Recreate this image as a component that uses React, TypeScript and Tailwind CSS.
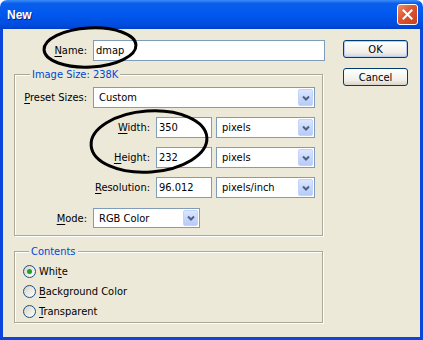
import React from 'react';

const Chevron = () => (
  <svg width="8" height="6" viewBox="0 0 8 6">
    <path d="M1 1.5 L4 4.5 L7 1.5" fill="none" stroke="#4D6185" strokeWidth="2" />
  </svg>
);

const Select = ({ value, className }: { value: string; className: string }) => (
  <div className={`flex items-stretch border border-[#7F9DB9] bg-white ${className}`}>
    <span className="flex-1 flex items-center pl-[5px]">{value}</span>
    <div className="my-px mr-px w-[15px] rounded-[2px] border border-[#C3D3FD] bg-[linear-gradient(to_bottom,#DCE6FE,#B6CBF8)] flex items-center justify-center">
      <Chevron />
    </div>
  </div>
);

const TextBox = ({ value, className }: { value: string; className: string }) => (
  <div className={`flex items-center border border-[#7F9DB9] bg-white pl-[2px] ${className}`}>{value}</div>
);

const Radio = ({ checked, children }: { checked?: boolean; children: React.ReactNode }) => (
  <div className="flex items-center h-[20px]">
    <span className="w-[13px] h-[13px] rounded-full border border-[#1C5180] bg-[linear-gradient(135deg,#D6D2C2,#FFFFFF)] flex items-center justify-center">
      {checked && <span className="w-[5px] h-[5px] rounded-full bg-[#21A121]" />}
    </span>
    <span className="ml-[3px]">{children}</span>
  </div>
);

const U = ({ children }: { children: React.ReactNode }) => (
  <span className="underline underline-offset-[2px]">{children}</span>
);

const XpButton = ({ children, isDefault }: { children: React.ReactNode; isDefault?: boolean }) => (
  <div
    className={`w-[65px] h-[18px] rounded-[3px] border border-[#003C74] bg-[linear-gradient(to_bottom,#FFFFFF,#F0EFEA_70%,#D9D4C8)] flex items-center justify-center ${
      isDefault ? 'shadow-[inset_0_0_0_1px_#B6CCF4]' : ''
    }`}
  >
    {children}
  </div>
);

const App: React.FC = () => {
  return (
    <div className="relative w-[423px] h-[340px] bg-white flex flex-col font-['DejaVu_Sans_Condensed','Liberation_Sans',sans-serif] text-[11px] leading-[13px] text-black">
      {/* Title bar */}
      <div className="h-[29px] rounded-t-[7px] bg-[linear-gradient(to_bottom,#3D8DF8_0%,#0A5EEB_12%,#0058EE_50%,#004BDD_88%,#0040C8_100%)] flex items-center pl-[7px] pr-[5px]">
        <span className="font-['Liberation_Sans',sans-serif] font-bold text-[12px] text-white [text-shadow:1px_1px_0_#0A1E7A] mt-[1px]">
          New
        </span>
        <div className="ml-auto w-[21px] h-[21px] rounded-[3px] border border-white bg-[linear-gradient(135deg,#EC8F6C,#DE5430_45%,#C8401C)] flex items-center justify-center">
          <svg width="11" height="11" viewBox="0 0 11 11">
            <path d="M1.5 1.5 L9.5 9.5 M9.5 1.5 L1.5 9.5" stroke="#fff" strokeWidth="2" strokeLinecap="square" />
          </svg>
        </div>
      </div>

      {/* Body */}
      <div className="flex-1 flex bg-[#ECE9D8] border-x-[3px] border-b-[3px] border-[#0B45DB]">
        <div className="pl-[11px] pt-[11px] w-[322px] flex flex-col">
          {/* Name */}
          <div className="flex items-center h-[21px]">
            <span className="w-[73px] text-right">
              <U>N</U>ame:
            </span>
            <TextBox value="dmap" className="ml-[6px] w-[232px] h-[21px]" />
          </div>

          {/* Image Size group */}
          <fieldset className="mt-[7px] w-[309px] border border-[#ACA899] shadow-[inset_1px_1px_0_#fff,1px_1px_0_#fff] pl-[8px] pr-[7px] pt-[6px] pb-[7px]">
            <legend className="ml-[7px] px-[2px] h-[13px] text-[#0046D5] bg-[#ECE9D8]">Image Size: 238K</legend>
            <div className="flex flex-col gap-[9px]">
              <div className="flex items-center h-[21px]">
                <span className="w-[64px] text-right">
                  <U>P</U>reset Sizes:
                </span>
                <Select value="Custom" className="ml-[6px] w-[222px] h-[21px]" />
              </div>
              <div className="flex items-center h-[21px]">
                <span className="w-[127px] text-right">
                  <U>W</U>idth:
                </span>
                <TextBox value="350" className="ml-[6px] w-[56px] h-[21px]" />
                <Select value="pixels" className="ml-[4px] w-[99px] h-[21px]" />
              </div>
              <div className="flex items-center h-[21px]">
                <span className="w-[127px] text-right">
                  <U>H</U>eight:
                </span>
                <TextBox value="232" className="ml-[6px] w-[56px] h-[21px]" />
                <Select value="pixels" className="ml-[4px] w-[99px] h-[21px]" />
              </div>
              <div className="flex items-center h-[21px]">
                <span className="w-[127px] text-right">
                  <U>R</U>esolution:
                </span>
                <TextBox value="96.012" className="ml-[6px] w-[56px] h-[21px]" />
                <Select value="pixels/inch" className="ml-[4px] w-[99px] h-[21px]" />
              </div>
              <div className="flex items-center h-[20px] mt-px">
                <span className="w-[64px] text-right">
                  <U>M</U>ode:
                </span>
                <Select value="RGB Color" className="ml-[6px] w-[107px] h-[20px]" />
              </div>
            </div>
          </fieldset>

          {/* Contents group */}
          <fieldset className="mt-[9px] w-[309px] border border-[#ACA899] shadow-[inset_1px_1px_0_#fff,1px_1px_0_#fff] pl-[8px] pt-[3px] pb-[1px]">
            <legend className="ml-[6px] px-[2px] h-[13px] text-[#0046D5] bg-[#ECE9D8]">Contents</legend>
            <Radio checked>
              Whi<U>t</U>e
            </Radio>
            <Radio>
              <U>B</U>ackground Color
            </Radio>
            <Radio>
              <U>T</U>ransparent
            </Radio>
          </fieldset>
        </div>

        {/* Buttons */}
        <div className="ml-[18px] pt-[11px] flex flex-col gap-[10px]">
          <XpButton isDefault>OK</XpButton>
          <XpButton>Cancel</XpButton>
        </div>
      </div>

      {/* Hand-drawn annotation ellipses */}
      <svg className="absolute inset-0 pointer-events-none" width="423" height="340">
        <ellipse cx="90" cy="47.5" rx="46" ry="19.5" fill="none" stroke="#000" strokeWidth="3" transform="rotate(-3 90 47.5)" />
        <ellipse cx="149" cy="141.5" rx="58" ry="30.5" fill="none" stroke="#000" strokeWidth="3" transform="rotate(-4 149 141.5)" />
      </svg>
    </div>
  );
};

export default App;
